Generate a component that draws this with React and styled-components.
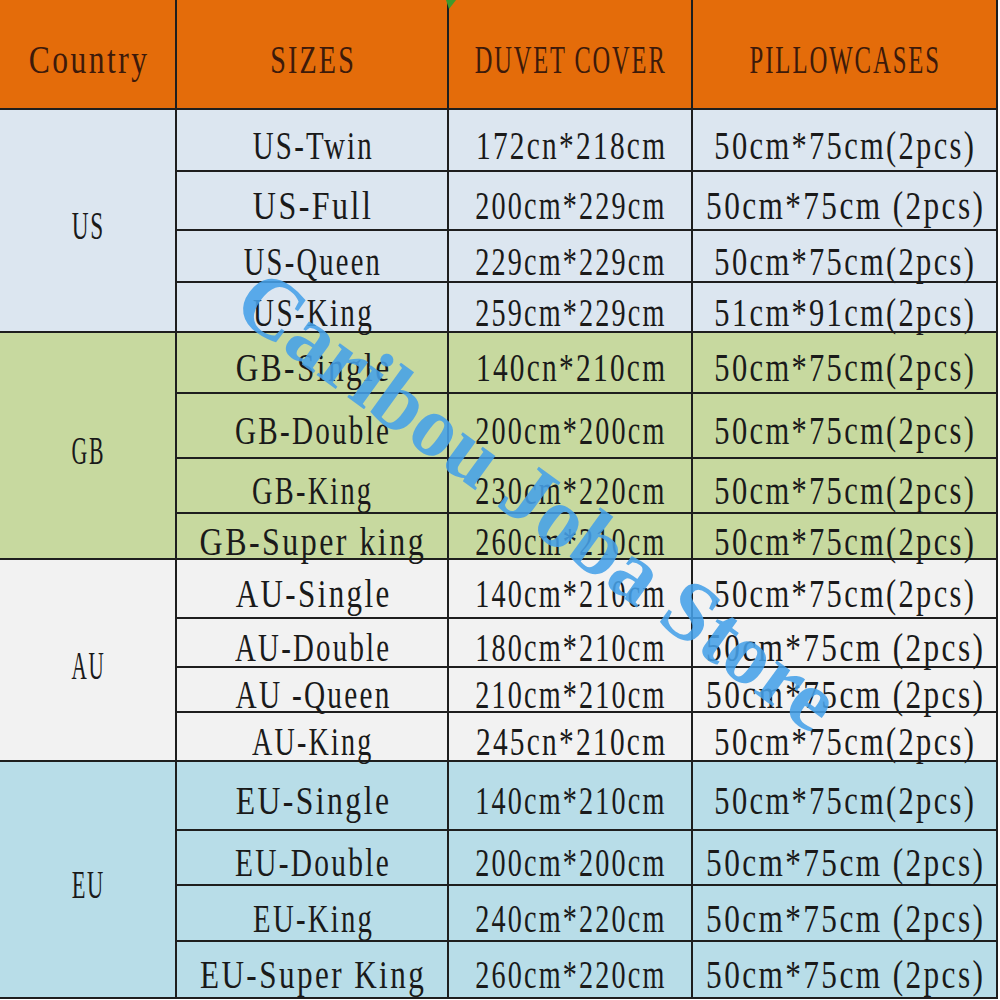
import React, { useLayoutEffect, useRef, useState } from "react";
import styled, { createGlobalStyle } from "styled-components";

// every glyph in the source chart takes the same half-width cell
const CHAR_W = 17.6;

const groups = [
  {
    country: "US",
    bg: "#dce6f0",
    rows: [
      { h: 60, size: "US-Twin", duvet: "172cn*218cm", pillow: "50cm*75cm(2pcs)" },
      { h: 57, size: "US-Full", duvet: "200cm*229cm", pillow: "50cm*75cm (2pcs)" },
      { h: 50, size: "US-Queen", duvet: "229cm*229cm", pillow: "50cm*75cm(2pcs)" },
      { h: 48, size: "US-King", duvet: "259cm*229cm", pillow: "51cm*91cm(2pcs)" },
    ],
  },
  {
    country: "GB",
    bg: "#c7d99f",
    rows: [
      { h: 59, size: "GB-Single", duvet: "140cn*210cm", pillow: "50cm*75cm(2pcs)" },
      { h: 63, size: "GB-Double", duvet: "200cm*200cm", pillow: "50cm*75cm(2pcs)" },
      { h: 53, size: "GB-King", duvet: "230cm*220cm", pillow: "50cm*75cm(2pcs)" },
      { h: 44, size: "GB-Super king", duvet: "260cm*210cm", pillow: "50cm*75cm(2pcs)" },
    ],
  },
  {
    country: "AU",
    bg: "#f2f2f2",
    rows: [
      { h: 57, size: "AU-Single", duvet: "140cm*210cm", pillow: "50cm*75cm(2pcs)" },
      { h: 47, size: "AU-Double", duvet: "180cm*210cm", pillow: "50cm*75cm (2pcs)" },
      { h: 43, size: "AU -Queen", duvet: "210cm*210cm", pillow: "50cm*75cm (2pcs)" },
      { h: 47, size: "AU-King", duvet: "245cn*210cm", pillow: "50cm*75cm(2pcs)" },
    ],
  },
  {
    country: "EU",
    bg: "#b8dde8",
    rows: [
      { h: 67, size: "EU-Single", duvet: "140cm*210cm", pillow: "50cm*75cm(2pcs)" },
      { h: 53, size: "EU-Double", duvet: "200cm*200cm", pillow: "50cm*75cm (2pcs)" },
      { h: 54, size: "EU-King", duvet: "240cm*220cm", pillow: "50cm*75cm (2pcs)" },
      { h: 55, size: "EU-Super King", duvet: "260cm*220cm", pillow: "50cm*75cm (2pcs)" },
    ],
  },
];

const headers = ["Country", "SIZES", "DUVET COVER", "PILLOWCASES"];

const GlobalStyle = createGlobalStyle`
  body {
    margin: 0;
    background: #ffffff;
  }
`;

const Page = styled.div`
  position: relative;
  width: 1000px;
  height: 1000px;
  overflow: hidden;
  background: #ffffff;
`;

const Table = styled.div`
  display: grid;
  grid-template-columns: 175px 270px 242px 303px;
  grid-template-rows: ${(p) => p.$rows};
  gap: 2px;
  width: fit-content;
  padding: 0 2px 2px 0;
  background: #1e1e1e;
`;

const Cell = styled.div`
  display: flex;
  align-items: center;
  justify-content: center;
  padding-top: 10px;
  background: ${(p) => p.$bg};
  grid-row: ${(p) => (p.$span ? `span ${p.$span}` : "auto")};
  min-width: 0;
`;

const Text = styled.span`
  display: inline-block;
  flex-shrink: 0;
  white-space: pre;
  font-family: "Liberation Serif", "Times New Roman", serif;
  font-size: 39px;
  line-height: 1;
  letter-spacing: 3px;
  padding-left: 3px;
  color: ${(p) => (p.$head ? "#3d1a0a" : "#1a1a1a")};
  transform-origin: center;
`;

const Watermark = styled.span`
  position: absolute;
  left: 538px;
  top: 500px;
  transform: translate(-50%, -50%) rotate(36deg);
  white-space: nowrap;
  font-family: "Liberation Serif", "Times New Roman", serif;
  font-weight: bold;
  font-size: 86px;
  color: rgba(70, 160, 232, 0.88);
  pointer-events: none;
`;

const Tip = styled.svg`
  position: absolute;
  left: 444px;
  top: 0;
`;

// squeeze the serif text to the fixed cell width of the original chart
const Label = ({ children, head }) => {
  const ref = useRef(null);
  const [scale, setScale] = useState(1);
  useLayoutEffect(() => {
    const w = ref.current.offsetWidth;
    if (w) setScale((children.length * CHAR_W) / w);
  }, [children]);
  return (
    <Text ref={ref} $head={head} style={{ transform: `scaleX(${scale})` }}>
      {children}
    </Text>
  );
};

export default function App() {
  const heights = [108, ...groups.flatMap((g) => g.rows.map((r) => r.h))];
  const rows = heights.map((h) => `${h}px`).join(" ");
  return (
    <Page>
      <GlobalStyle />
      <Table $rows={rows}>
        {headers.map((h) => (
          <Cell key={h} $bg="#e46c0a">
            <Label head>{h}</Label>
          </Cell>
        ))}
        {groups.map((g) =>
          g.rows.map((r, i) => (
            <React.Fragment key={r.size}>
              {i === 0 && (
                <Cell $bg={g.bg} $span={g.rows.length}>
                  <Label>{g.country}</Label>
                </Cell>
              )}
              <Cell $bg={g.bg}>
                <Label>{r.size}</Label>
              </Cell>
              <Cell $bg={g.bg}>
                <Label>{r.duvet}</Label>
              </Cell>
              <Cell $bg={g.bg}>
                <Label>{r.pillow}</Label>
              </Cell>
            </React.Fragment>
          ))
        )}
      </Table>
      <Tip width="12" height="10" viewBox="0 0 12 10">
        <path d="M2 0 L12 0 L5 9 Z" fill="#3e9a2e" />
      </Tip>
      <Watermark>Caribou Joba Store</Watermark>
    </Page>
  );
}
